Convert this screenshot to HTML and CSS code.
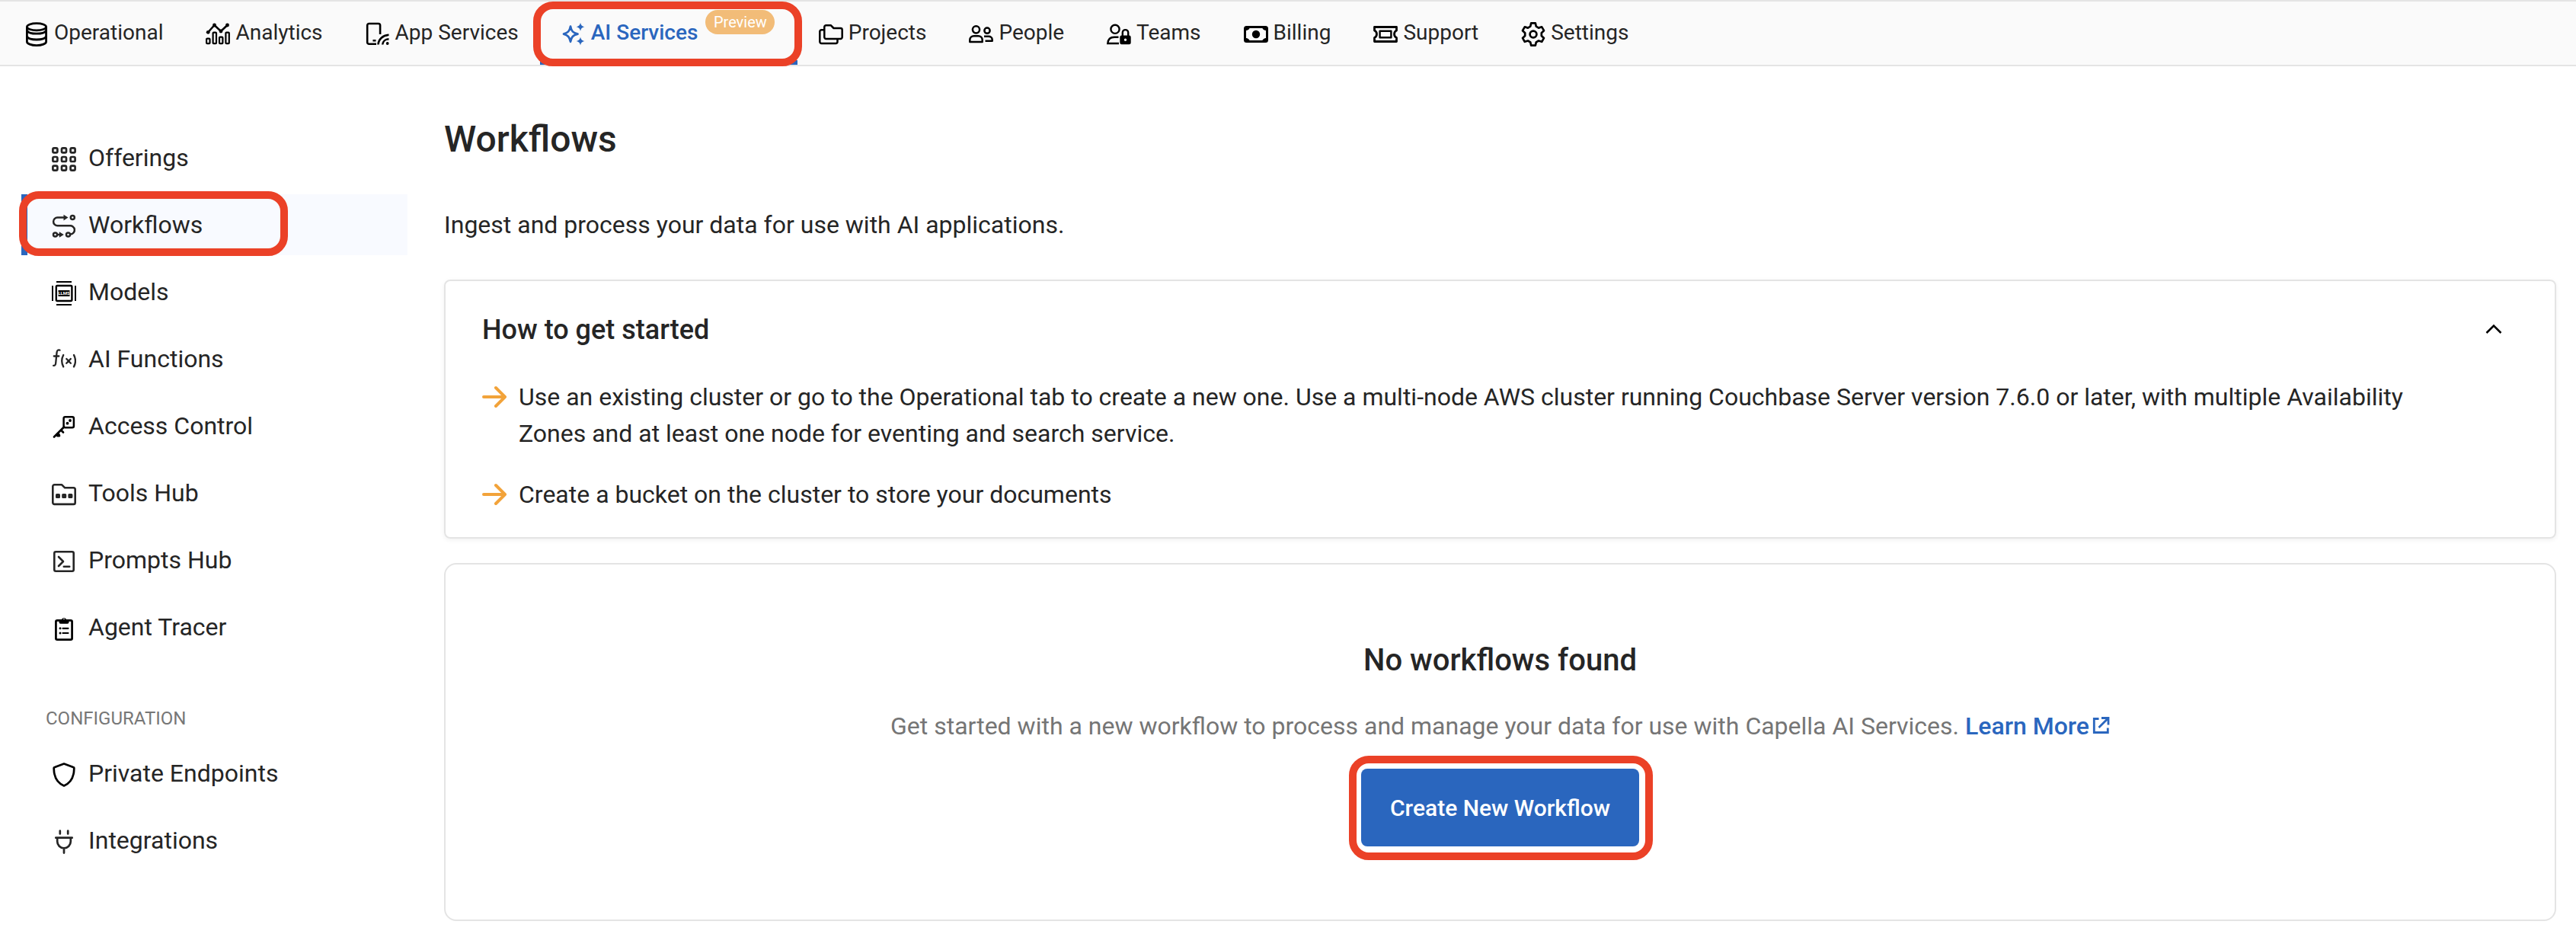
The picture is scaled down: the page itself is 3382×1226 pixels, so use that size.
FILE: index.html
```html
<!DOCTYPE html>
<html lang="en">
<head>
<meta charset="utf-8">
<title>Workflows</title>
<link rel="stylesheet" href="styles.css">
</head>
<body>
<nav class="topnav">
  <a class="tab"><svg class="ico" viewBox="0 0 32 32"><g fill="none" stroke="#000" stroke-width="2.8"><ellipse cx="16" cy="6.2" rx="12.6" ry="4.6"/><path d="M3.4 6.2v19.6c0 2.6 5.6 4.8 12.6 4.8s12.6-2.2 12.6-4.8V6.2M3.4 11.2c1.4 2.4 6.4 4 12.600 4s11.200-1.600 12.600-4M3.400 19c1.400 2.400 6.400 4 12.600 4s11.200-1.600 12.600-4"/></g></svg><span>Operational</span></a>
  <a class="tab"><svg class="ico" viewBox="0 0 32 32"><g fill="none" stroke="#000" stroke-width="2.2"><rect x="1.100" y="21.600" width="4.400" height="6.600" rx="1"/><rect x="9.600" y="13.600" width="4.400" height="14.600" rx="1"/><rect x="18" y="19.600" width="4.400" height="8.600" rx="1"/><rect x="26.400" y="13.600" width="4.400" height="14.600" rx="1"/><path d="M3 13.500 11.500 4 20 12 28.500 4" stroke-width="2.600"/></g><circle cx="3.200" cy="13.300" r="2.400"/><circle cx="11.500" cy="4" r="2.400"/><circle cx="20" cy="12" r="2.400"/><circle cx="28.500" cy="4" r="2.400"/></svg><span>Analytics</span></a>
  <a class="tab"><svg class="ico" viewBox="0 0 32 32"><g fill="none" stroke="#000" stroke-width="2.600"><path d="M14 28.700H4.500a2.300 2.300 0 0 1-2.300-2.300V4.300A2.300 2.300 0 0 1 4.500 2h12.300a2.300 2.300 0 0 1 2.300 2.300V16M9.500 24.200h4M16.500 29.500C17 22.500 22.500 17.200 30.500 16.800M22.200 29.500c.3-4 3.800-7 8.300-7.300"/></g><circle cx="28.700" cy="28" r="1.900"/></svg><span>App Services</span></a>
  <a class="tab active"><svg class="ico" viewBox="0 0 32 32"><path d="M12 5.500C13.200 12 15 14 21.500 15.600 15 17.300 13.200 19.500 12 25.800 10.800 19.500 8.600 17.300 3 15.600 8.600 14 10.800 12 12 5.500Z" fill="none" stroke="currentColor" stroke-width="2.700" stroke-linejoin="round"/><path fill="currentColor" d="M25 .8c.8 3.400 2 4.600 5.600 5.500-3.600.9-4.800 2.100-5.600 5.500-.8-3.400-2-4.600-5.600-5.500C23 5.400 24.200 4.200 25 .8ZM25 19.400c.8 3.400 2 4.600 5.600 5.500-3.600.9-4.800 2.100-5.600 5.500-.8-3.400-2-4.600-5.600-5.500 3.600-.9 4.800-2.100 5.600-5.500Z"/></svg><span>AI Services</span><span class="badge">Preview</span><i class="mark mark-tab"></i></a>
  <a class="tab"><svg class="ico" viewBox="0 0 32 32"><g fill="none" stroke="#000" stroke-width="2.500" stroke-linejoin="round"><path d="M9.500 4.200h6.200l3.800 3.800h9a2.200 2.200 0 0 1 2.200 2.200v9.600a2.200 2.200 0 0 1-2.200 2.200h-19a2.200 2.200 0 0 1-2.200-2.200V6.400a2.200 2.200 0 0 1 2.200-2.200Z"/><path d="M7.300 10.200H3.500a2.200 2.200 0 0 0-2.200 2.200v13.400A2.200 2.200 0 0 0 3.500 28h18.800a2.200 2.200 0 0 0 2.200-2.200V22"/></g></svg><span>Projects</span></a>
  <a class="tab"><svg class="ico" viewBox="0 0 32 32"><g fill="none" stroke="#000" stroke-width="2.500" stroke-linejoin="round"><circle cx="9.500" cy="9.800" r="4.600"/><circle cx="24" cy="11.200" r="3.600"/><path d="M1.300 26v-2.600c0-3.200 2.400-5.200 5.400-5.200h5.600c3 0 5.400 2 5.400 5.200V26ZM20 18.800h5.800c2.600 0 4.900 1.700 4.900 4.400v1.600H21.500"/></g></svg><span>People</span></a>
  <a class="tab"><svg class="ico" viewBox="0 0 32 32"><g fill="none" stroke="#000" stroke-width="2.400"><circle cx="11" cy="9.300" r="5.600"/><path d="M15.500 19.800H10c-5 0-8.300 2.800-8.700 8.200h14.700"/><path d="M20.800 18v-4.200a3.700 3.700 0 0 1 7.400 0V18"/></g><path fill-rule="evenodd" d="M19.500 17.500h10a2.200 2.200 0 0 1 2.200 2.200v7.400a2.200 2.200 0 0 1-2.200 2.200h-10a2.200 2.200 0 0 1-2.200-2.200v-7.400a2.200 2.200 0 0 1 2.200-2.200Zm5 4a1.700 1.700 0 1 0 0 3.400 1.700 1.700 0 0 0 0-3.400Z"/></svg><span>Teams</span></a>
  <a class="tab"><svg class="ico" viewBox="0 0 32 32"><rect x="1.500" y="6.500" width="29" height="19" rx="2" fill="none" stroke="#000" stroke-width="3"/><path d="M2 6h6c0 3-2.500 5-6 5ZM30 6h-6c0 3 2.500 5 6 5ZM2 26h6c0-3-2.500-5-6-5ZM30 26h-6c0-3 2.500-5 6-5Z"/><circle cx="16" cy="16" r="5.200"/></svg><span>Billing</span></a>
  <a class="tab"><svg class="ico" viewBox="0 0 32 32"><g fill="none" stroke="#000" stroke-width="2.800" stroke-linejoin="round"><path d="M1.500 6.500h29v4.600a5.200 5.200 0 0 0 0 9.400v5h-29v-5a5.200 5.200 0 0 0 0-9.400Z"/><rect x="8.600" y="11.800" width="14.800" height="8.400" stroke-width="2.400"/></g></svg><span>Support</span></a>
  <a class="tab"><svg class="ico" viewBox="0 0 32 32"><g fill="none" stroke="#000" stroke-width="2.700" stroke-linejoin="round"><path d="M13.200 1.400h5.600l1 4.300 3.200 1.900 4.200-1.300 2.800 4.900-3.200 3v3.700l3.200 3-2.800 4.900-4.200-1.300-3.200 1.900-1 4.200h-5.600l-1-4.200L9 24.500l-4.200 1.300L2 20.900l3.200-3v-3.700l-3.200-3 2.800-4.900L9 7.600l3.200-1.900Z"/><circle cx="16" cy="16" r="4.400"/></g></svg><span>Settings</span></a>
</nav>
<div class="layout">
  <aside class="side">
    <a class="item"><svg class="ico" viewBox="0 0 32 32"><g fill="none" stroke="#252525" stroke-width="2.700"><rect x="1.400" y="1.400" width="6" height="6" rx="1.600"/><rect x="13" y="1.400" width="6" height="6" rx="1.600"/><rect x="24.600" y="1.400" width="6" height="6" rx="1.600"/><rect x="1.400" y="13" width="6" height="6" rx="1.600"/><rect x="13" y="13" width="6" height="6" rx="1.600"/><rect x="24.600" y="13" width="6" height="6" rx="1.600"/><rect x="1.400" y="24.600" width="6" height="6" rx="1.600"/><rect x="13" y="24.600" width="6" height="6" rx="1.600"/><rect x="24.600" y="24.600" width="6" height="6" rx="1.600"/></g></svg><span>Offerings</span></a>
    <a class="item current"><svg class="ico" viewBox="0 0 32 32"><g fill="none" stroke="#252525" stroke-width="2.500"><path d="M17 4.500H7.500a5.400 5.400 0 0 0 0 10.800h16a5.600 5.600 0 0 1 1.500 11.200M7 27h4"/><circle cx="27.300" cy="4.600" r="2.500"/><circle cx="4.500" cy="27" r="2.500"/><circle cx="21.500" cy="27" r="2.500"/></g><path fill="#252525" d="M15.500.8 21.500 4.600 15.500 8.400ZM9.800 23.200 15.800 27 9.800 30.800Z"/></svg><span>Workflows</span><i class="mark mark-item"></i></a>
    <a class="item"><svg class="ico" viewBox="0 0 32 32"><g fill="none" stroke="#000" stroke-width="2"><path d="M6 1h20M6 31h20M1 6v20M31 6v20"/><rect x="5.800" y="6" width="20.600" height="20" rx="1.500" stroke-width="2.400"/></g><rect x="8.500" y="12" width="15" height="8"/><text class="chip" x="16" y="18.200" text-anchor="middle">LLMS</text></svg><span>Models</span></a>
    <a class="item"><svg class="ico" viewBox="0 0 32 32"><g fill="none" stroke="#252525" stroke-width="2.300" stroke-linecap="round"><path d="M10.500 2.600C7.800 1.800 6.800 3.400 6.500 6L5.200 19.500c-.2 2.300-1 3.600-3 3.400M2.800 10.500h6.500"/><path d="M15.200 9c-2.400 4.600-2.400 10.800 0 15.400M29 9c2.400 4.600 2.400 10.800 0 15.400M19.300 14l5.500 5.800M24.800 14l-5.500 5.800"/></g></svg><span>AI Functions</span></a>
    <a class="item"><svg class="ico" viewBox="0 0 32 32"><rect x="15.600" y="2.200" width="13.300" height="14" rx="2" fill="none" stroke="#000" stroke-width="2.500"/><circle cx="24" cy="7" r="1.900"/><circle cx="20.500" cy="10.700" r="1.900"/><path d="M16 15.500 3 28.500M12.500 20l2.500 2.500M7.500 24.500l2.500 2.500" fill="none" stroke="#000" stroke-width="2.700" stroke-linecap="round"/><circle cx="8.300" cy="26" r="2.600"/></svg><span>Access Control</span></a>
    <a class="item"><svg class="ico" viewBox="0 0 32 32"><path d="M3.500 3.300h9.700l4 4h11.300a2.200 2.200 0 0 1 2.200 2.200v17.200a2.200 2.200 0 0 1-2.200 2.200h-25a2.200 2.200 0 0 1-2.200-2.200V5.500a2.200 2.200 0 0 1 2.200-2.200Z" fill="none" stroke="#252525" stroke-width="2.600" stroke-linejoin="round"/><g fill="#252525"><rect x="5" y="15" width="6" height="6" rx="1.500"/><rect x="13.200" y="15" width="6" height="6" rx="1.500"/><rect x="21.400" y="15" width="6" height="6" rx="1.500"/></g></svg><span>Tools Hub</span></a>
    <a class="item"><svg class="ico" viewBox="0 0 32 32"><g fill="none" stroke="#252525" stroke-width="2.600" stroke-linecap="round" stroke-linejoin="round"><rect x="3.300" y="3.300" width="25.400" height="25.400" rx="2"/><path d="M9 10l6 6-6 6M15.800 22.800h7.400"/></g></svg><span>Prompts Hub</span></a>
    <a class="item"><svg class="ico" viewBox="0 0 32 32"><rect x="5.400" y="5.400" width="21.200" height="25.200" rx="1.800" fill="none" stroke="#000" stroke-width="2.800"/><path fill-rule="evenodd" d="M9.500 4.500h3.200a3.400 3.400 0 0 1 6.600 0h3.200v3.200a2 2 0 0 1-2 2h-9a2 2 0 0 1-2-2ZM16 3a1.200 1.200 0 1 0 0 2.400A1.200 1.200 0 0 0 16 3Z"/><path d="M14.500 15.800h7M14.500 22h7" stroke="#000" stroke-width="2.200" stroke-linecap="round"/><circle cx="11" cy="15.800" r="1.500"/><circle cx="11" cy="22" r="1.500"/></svg><span>Agent Tracer</span></a>
    <h2 class="group">CONFIGURATION</h2>
    <a class="item"><svg class="ico" viewBox="0 0 32 32"><path d="M16 1.500l12 4.600a1.500 1.500 0 0 1 1.300 1.700C29.200 18 25 26.500 16 30.500 7 26.500 2.800 18 2.700 7.800A1.500 1.500 0 0 1 4 6.100Z" fill="none" stroke="#000" stroke-width="2.700" stroke-linejoin="round"/></svg><span>Private Endpoints</span></a>
    <a class="item"><svg class="ico" viewBox="0 0 32 32"><path d="M10.800 1.500v4M21.200 1.500v4M5.300 10.700h21.400M7.200 11v4.500a8.800 8.800 0 0 0 17.600 0V11M16 25v5.600" fill="none" stroke="#252525" stroke-width="2.700" stroke-linecap="round"/></svg><span>Integrations</span></a>
  </aside>
  <main class="main">
    <h1 class="title">Workflows</h1>
    <p class="lead">Ingest and process your data for use with AI applications.</p>
    <section class="card start">
      <header class="start-head"><h2 class="start-title">How to get started</h2><svg class="chev" viewBox="0 0 24 14"><path d="M2.500 12 12 2.500 21.500 12" fill="none" stroke="#000" stroke-width="2.500"/></svg></header>
      <ul class="steps">
        <li class="step"><svg class="arrow" viewBox="0 0 32 32"><path d="M2 16h28M18 4l12 12-12 12" fill="none" stroke="#f2a33a" stroke-width="4" stroke-linecap="round" stroke-linejoin="round"/></svg><p>Use an existing cluster or go to the Operational tab to create a new one. Use a multi-node AWS cluster running Couchbase Server version 7.6.0 or later, with multiple Availability<br>Zones and at least one node for eventing and search service.</p></li>
        <li class="step"><svg class="arrow" viewBox="0 0 32 32"><path d="M2 16h28M18 4l12 12-12 12" fill="none" stroke="#f2a33a" stroke-width="4" stroke-linecap="round" stroke-linejoin="round"/></svg><p>Create a bucket on the cluster to store your documents</p></li>
      </ul>
    </section>
    <section class="card empty">
      <h2 class="empty-title">No workflows found</h2>
      <p class="empty-text">Get started with a new workflow to process and manage your data for use with Capella AI Services. <a class="link">Learn More<svg class="ext" viewBox="0 0 24 24"><path d="M9.500 3.500H3.300v18h18v-6M13 2.500h9v9M21.500 3 9.500 15" fill="none" stroke="currentColor" stroke-width="2.800"/></svg></a></p>
      <button class="cta">Create New Workflow<i class="mark mark-cta"></i></button>
    </section>
  </main>
</div>
</body>
</html>
```
FILE: styles.css
```css
* { box-sizing: border-box; }
body {
  margin: 0;
  width: 3382px;
  height: 1226px;
  overflow: hidden;
  background: #fff;
  color: #252525;
  font-family: Roboto, "Liberation Sans", sans-serif;
  font-size: 32px;
}
h1, h2, p, ul { margin: 0; padding: 0; font-weight: 500; }
p { font-weight: 400; }
.ico { width: 32px; height: 32px; flex: none; }

.topnav {
  display: flex;
  height: 87px;
  padding-left: 4px;
  background: #fafafa;
  border-top: 2px solid #e4e4e4;
  border-bottom: 2px solid #e4e4e4;
}
.tab {
  position: relative;
  display: flex;
  align-items: center;
  gap: 7px;
  height: 83px;
  padding: 0 28px 2px;
  font-size: 28px;
  white-space: nowrap;
}
.tab .ico { margin-top: 5px; }
.tab.active {
  width: 338px;
  color: #2a66be;
  font-weight: 500;
  box-shadow: inset 0 -6px #2a66be;
}
.badge {
  align-self: flex-start;
  width: 91px;
  height: 32px;
  margin-top: 11px;
  margin-left: 3px;
  border-radius: 16px;
  background: #f2bc78;
  color: #fff;
  font-size: 20px;
  font-weight: 400;
  line-height: 32px;
  text-align: center;
}

.mark {
  position: absolute;
  border: 10px solid #eb4127;
  border-radius: 26px;
}
.mark-tab { left: -9px; top: 0; width: 353px; height: 85px; }
.mark-item { left: -3px; top: -4px; width: 353px; height: 85px; }
.mark-cta { left: -16px; top: -17px; width: 399px; height: 137px; }

.layout { display: flex; }
.side {
  display: flex;
  flex-direction: column;
  gap: 8px;
  width: 507px;
  margin-left: 28px;
  padding-top: 80px;
}
.item {
  position: relative;
  display: flex;
  align-items: center;
  gap: 16px;
  height: 80px;
  padding-left: 40px;
}
.item .ico { margin-top: 4px; }
.item.current { background: #f8faff; box-shadow: inset 8px 0 #2a66be; }
.chip { fill: #fff; font-size: 6px; font-weight: 700; }
.group {
  height: 96px;
  padding: 48px 0 0 32px;
  color: #777;
  font-size: 24px;
  font-weight: 400;
  line-height: 48px;
}

.main { width: 2773px; margin-left: 48px; padding-top: 64px; }
.title { font-size: 48px; line-height: 64px; }
.lead { margin-top: 56px; line-height: 48px; }
.card { border: 2px solid #e4e4e4; }
.start {
  height: 340px;
  margin-top: 48px;
  padding: 40px 48px 32px;
  border-radius: 8px;
  box-shadow: 0 2px 6px rgba(0, 0, 0, .06);
}
.start-head { display: flex; justify-content: space-between; height: 48px; padding-right: 20px; }
.start-title { font-size: 36px; line-height: 48px; }
.chev { width: 24px; height: 14px; margin-top: 16px; }
.steps { display: flex; flex-direction: column; gap: 32px; margin-top: 40px; list-style: none; }
.step { display: flex; gap: 16px; line-height: 48px; white-space: nowrap; }
.arrow { flex: none; width: 32px; height: 32px; margin-top: 8px; }
.empty {
  display: flex;
  flex-direction: column;
  align-items: center;
  height: 470px;
  margin-top: 32px;
  padding-top: 98px;
  border-radius: 16px;
}
.empty-title { font-size: 40px; line-height: 56px; }
.empty-text { margin-top: 34px; color: #757575; line-height: 48px; white-space: nowrap; }
.link { color: #2a66be; font-weight: 500; }
.ext { width: 24px; height: 24px; margin-left: 3px; }
.cta {
  position: relative;
  width: 365px;
  height: 102px;
  margin-top: 32px;
  padding: 0;
  border: 0;
  border-radius: 8px;
  background: #2a66be;
  color: #fff;
  font: 500 30px/104px Roboto, "Liberation Sans", sans-serif;
}
```
